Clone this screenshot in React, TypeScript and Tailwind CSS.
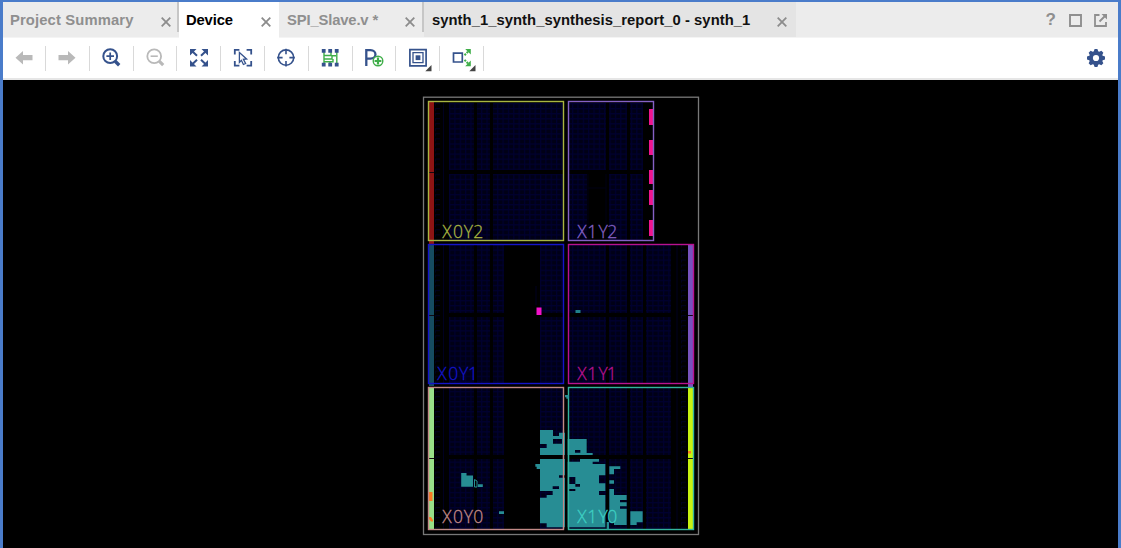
import React from "react";

const NAVY = "#35528c";
const GREEN = "#3fae49";

function Close({ className = "" }: { className?: string }) {
  return (
    <svg width="10" height="10" viewBox="0 0 10 10" className={className}>
      <path d="M.7 .7L9.3 9.3M9.3 .7L.7 9.3" stroke="#8c8c8c" strokeWidth="1.8" fill="none" />
    </svg>
  );
}

const icons: React.ReactNode[] = [
  <path key="back" fill="#b9b9b9" d="M1.5 10.7L9 4v4h9.5v5.2H9V17.4z" />,
  <path key="fwd" fill="#b9b9b9" d="M18.5 10.7L11 4v4H1.5v5.2H11V17.4z" />,
  <g key="in" fill="none" stroke={NAVY}>
    <circle cx="9.2" cy="9.2" r="6.9" strokeWidth="2" />
    <path d="M5.4 9.2H13M9.2 5.4V13" strokeWidth="1.7" />
    <path d="M14.2 14.2l4 4" strokeWidth="3.4" />
  </g>,
  <g key="out" fill="none" stroke="#b9b9b9">
    <circle cx="9.2" cy="9.2" r="6.9" strokeWidth="1.8" />
    <path d="M5.6 9.2h7.2" strokeWidth="1.6" />
    <path d="M14.2 14.2l4 4" strokeWidth="3.2" />
  </g>,
  <g key="fit" fill={NAVY} stroke={NAVY} strokeWidth="2">
    <path stroke="none" d="M1 2h6.5L1 8.5zM19 2h-6.5L19 8.5zM1 19.5h6.5L1 13zM19 19.5h-6.5L19 13z" />
    <path d="M3 4l5 4.8M17 4l-5 4.8M3 17.5l5-4.8M17 17.5l-5-4.8" />
  </g>,
  <g key="select" fill="none" stroke={NAVY} strokeWidth="1.8">
    <path d="M1.8 7.5V2.8h4.6M13.6 2.8h4.6v4.7M1.8 14v4.7h4.6M13.6 18.7h4.6V14" />
    <path d="M6.4 5.4l7.2 6.6-3.2.3 2.2 4.2-2.2 1-2-4.2-2 2.1z" strokeWidth="1.3" />
  </g>,
  <g key="target" fill="none" stroke={NAVY} strokeWidth="1.6">
    <circle cx="10" cy="10.6" r="7.7" />
    <path d="M10 1.8v5.4M10 14V19.4M1.2 10.6h5.4M13.4 10.6h5.4" strokeWidth="1.6" />
  </g>,
  <g key="route">
    <path d="M4 5v12M16.8 5v12M4 8.5h7V5M4 12h8V8.8h4M4 14.7h6v3M10 14.7h3V12" fill="none" stroke={GREEN} strokeWidth="1.4" />
    <path fill={NAVY} d="M1.8 2h3.8v3.8H1.8zM8.3 2h3.8v3.8H8.3zM14.8 2h3.8v3.8h-3.8zM1.8 15.7h3.8v3.8H1.8zM8.3 15.7h3.8v3.8H8.3zM14.8 15.7h3.8v3.8h-3.8z" />
  </g>,
  <g key="pin">
    <path d="M2.3 19V3.2h4.2c6.6 0 6.6 8.4 0 8.4H2.3" fill="none" stroke={NAVY} strokeWidth="2.3" />
    <circle cx="14" cy="14" r="4.8" fill="white" stroke={GREEN} strokeWidth="1.4" />
    <path d="M14 10.6v6.8M10.6 14h6.8" stroke={GREEN} strokeWidth="2.2" />
  </g>,
  <g key="layers" fill="none" stroke={NAVY}>
    <path d="M1.9 2.6h16.2v16.2H1.9z" strokeWidth="1.7" />
    <path d="M5 5.7h10v10H5z" strokeWidth="1.3" />
    <path d="M7.6 8.3h4.8v4.8H7.6z" fill={NAVY} stroke="none" />
    <path d="M23.5 18v6.2h-6.2z" fill="#444" stroke="none" />
  </g>,
  <g key="connect">
    <path d="M1.5 6.2h8.8V15H1.5z" fill="none" stroke={NAVY} strokeWidth="1.7" />
    <path d="M12.5 8.2l4-4M12.5 12.9l4 4" stroke={GREEN} strokeWidth="2" strokeDasharray="2 1" />
    <path d="M18.8 2v5.6L13.2 2zM18.8 19.2v-5.6l-5.6 5.6z" fill={GREEN} />
    <path d="M23.5 18v6.2h-6.2z" fill="#444" />
  </g>,
];

type Box = [number, number, number, number];

const fabric: Box[] = [
  [449, 103, 25, 67], [477, 103, 13, 67], [493, 103, 70, 67],
  [449, 174, 25, 66], [477, 174, 13, 66], [493, 174, 70, 66],
  [569, 103, 37, 67], [609, 103, 18, 67], [630, 103, 13, 67],
  [569, 174, 18, 66], [609, 174, 18, 66], [630, 174, 13, 66],
  [449, 245, 25, 68], [477, 245, 13, 68], [493, 245, 11, 68], [540, 245, 23, 68],
  [449, 317, 25, 66], [477, 317, 13, 66], [493, 317, 11, 66], [540, 317, 23, 66],
  [569, 245, 37, 68], [609, 245, 18, 68], [630, 245, 13, 68], [646, 245, 25, 68],
  [569, 317, 37, 66], [609, 317, 18, 66], [630, 317, 13, 66], [646, 317, 25, 66],
  [449, 388, 25, 67], [477, 388, 13, 67], [493, 388, 11, 67], [540, 388, 23, 67],
  [449, 459, 25, 70], [477, 459, 13, 70], [493, 459, 11, 70], [540, 459, 23, 70],
  [569, 388, 37, 67], [609, 388, 18, 67], [630, 388, 13, 67], [646, 388, 25, 67],
  [569, 459, 37, 70], [609, 459, 18, 70], [630, 459, 13, 70], [646, 459, 25, 70],
];

const ioTicks: Box[] = [
  [435, 103, 6, 137], [435, 245, 6, 138], [435, 388, 6, 141],
  [681, 245, 6, 138], [681, 388, 6, 141],
];

const regions: { label: string; box: Box; color: string; xs: string; ty: number }[] = [
  { label: "X0Y2", box: [428.5, 101.5, 135, 139], color: "#a9b541", xs: "442.3 453 463.7 473.3", ty: 238 },
  { label: "X1Y2", box: [568.5, 101.5, 85, 139], color: "#8561c5", xs: "577.3 587.3 598.6 607.2", ty: 238 },
  { label: "X0Y1", box: [428.5, 244.5, 135, 139], color: "#1414c8", xs: "437.2 448.3 459 468", ty: 380.3 },
  { label: "X1Y1", box: [568.5, 244.5, 125, 139], color: "#b9128f", xs: "577.3 587.3 598.6 606.8", ty: 380.3 },
  { label: "X0Y0", box: [428.5, 387.5, 135, 142], color: "#c28a87", xs: "442.3 453 463.7 473.3", ty: 523 },
  { label: "X1Y0", box: [568.5, 387.5, 125, 142], color: "#32b49d", xs: "577.3 587.3 598.6 607.2", ty: 523 },
];

function DeviceMap() {
  return (
    <svg width="278" height="440" viewBox="422 96 278 440" className="shrink-0">
      <defs>
        <pattern id="tiles" width="5.35" height="5.05" x="449" y="103" patternUnits="userSpaceOnUse">
          <rect width="5.35" height="5.05" fill="#000016" />
          <path d="M0 .6H5.35M.6 0V5.05" stroke="#00002f" strokeWidth="1.2" />
        </pattern>
        <pattern id="ticks" width="6" height="5.05" x="435" y="103" patternUnits="userSpaceOnUse">
          <path d="M0 .5H5M.5 0V3" stroke="#00001f" strokeWidth="1" />
        </pattern>
      </defs>
      <rect x="423.5" y="97.2" width="275" height="437.3" fill="none" stroke="#787878" strokeWidth="1.3" />
      {fabric.map(([x, y, w, h], i) => (
        <rect key={i} x={x} y={y} width={w} height={h} fill="url(#tiles)" />
      ))}
      {ioTicks.map(([x, y, w, h], i) => (
        <rect key={i} x={x} y={y} width={w} height={h} fill="url(#ticks)" />
      ))}
      <path d="M443.5 103V240M443.5 245V383M443.5 388V529M677 245V383M677 388V529M536 286V305" stroke="#000020" />
      <path d="M588 174V240M606 174V240M588 188H606" stroke="#000014" />

      <path d="M429 102H434V244H429z" fill="#8d1414" />
      <path d="M429 245H434V386H429z" fill="#164b61" />
      <path d="M429 388H434V529H429z" fill="#98df89" />
      <path d="M688 245H693V387H688z" fill="#7652bd" />
      <path d="M688 388H693V529H688z" fill="#c8f211" />
      <path d="M429 172.5H434M429 315.5H434M429 458.5H434M688 315.5H693M688 458.5H693" stroke="#120812" />
      <path d="M429 492H432.5V501H429zM429 517H431L433 520V521.5H431L429 519zM688 451H691V453.5H688z" fill="#fb7a22" />
      <path d="M649 109H653V125H649zM649 140H653V155H649zM649 170H653V184H649zM649 190H653V205H649zM649 220H653V236H649z" fill="#f0148f" />
      <path d="M536.5 307.5H541.5V315H536.5z" fill="#f312c9" />
      <path d="M575.5 310H580.5V313H575.5z" fill="#20808a" />

      {regions.map(({ label, box: [x, y, w, h], color }) => (
        <rect key={label} x={x} y={y} width={w} height={h} fill="none" stroke={color} strokeWidth="1.4" />
      ))}

      <g transform="translate(530 380) scale(.33333)" fill="#278d94" fillRule="evenodd">
        <path d="M30 150H69V168H87V158H105V225H30V204H50V192H30zM69 177H96V191H69z" />
        <path d="M30 237H105V442H50V430H30V353H50V345H68V333H30zM87 286H105V293H87zM68 319H87V327H68z" />
        <path d="M113 177H170V219H188V225H113zM135 210H151V218H135z" />
        <path d="M113 245H150V237H207V245H188V252H226V286H207V310H226V333H207V345H226V442H113zM116 291H136V312H150V320H136V312H116zM116 327H136V333H116z" />
        <path d="M238 259H271V267H252V283H238zM238 301H252V311H238zM238 327H252V345H290V360H270V367H290V379H270V386H290V435H252V427H238zM301 394H338V427H320V435H301z" />
        <path d="M230 426H237V448H230zM105 45H116V56H109V52H105zM16 252H35V267H20V260H16z" />
      </g>
      <path d="M461.2 473H466.5V475.5H473V486.7H461.2zM478 484.2H482.8V487H478zM499 511.3H504V514H499z" fill="#278d94" />
      <path d="M474.5 479.5V487H477V481z" stroke="#278d94" fill="none" />
      <path d="M563.5 430V529" stroke="#c28a87" strokeWidth="1.2" />
      <path d="M568.5 430V529" stroke="#32b49d" strokeWidth="1.2" />

      {regions.map(({ label, color, xs, ty }) => {
        const ink = label === "X1Y0" ? "#3ed0c3" : color;
        return (
          <text
            key={label}
            x={xs}
            y={ty}
            fill={ink}
            stroke={ink}
            strokeWidth="0.3"
            className="font-['Open_Sans',sans-serif] text-[17.5px] font-light"
          >
            {label}
          </text>
        );
      })}
    </svg>
  );
}

export default function App() {
  return (
    <div className="flex h-[548px] w-[1121px] flex-col overflow-hidden border-x-3 border-t-2 border-[#4a7cca] bg-black font-['Liberation_Sans',sans-serif]">
      <div className="flex h-9 shrink-0 border-b border-[#f4f4f4] bg-[#ececec] text-[14.8px] leading-9 font-bold whitespace-nowrap text-[#8f8f8f]">
        <div className="flex w-[174px] items-center justify-between pr-1.5 pl-[7px]">
          <span className="tracking-[0.12px]">Project Summary</span>
          <Close className="mt-1" />
        </div>
        <div className="h-[30px] w-0.5 bg-[#c6c6c6]" />
        <div className="flex h-9 w-[100px] items-center justify-between bg-white pr-2 pl-[7px] text-black">
          <span className="tracking-[-0.15px]">Device</span>
          <Close className="mt-1" />
        </div>
        <div className="flex w-[143px] items-center justify-between pr-[7px] pl-2">
          <span className="tracking-[-0.15px]">SPI_Slave.v *</span>
          <Close className="mt-1" />
        </div>
        <div className="h-[30px] w-0.5 bg-[#c6c6c6]" />
        <div className="flex w-[372px] items-center justify-between bg-[#e4e4e4] pr-[9px] pl-2 text-[#111]">
          <span className="tracking-[0.04px]">synth_1_synth_synthesis_report_0 - synth_1</span>
          <Close className="mt-1" />
        </div>
        <div className="flex flex-1 items-center justify-end gap-3 pr-[11px]">
          <span className="mr-px text-[17px]">?</span>
          <svg width="13" height="13" viewBox="0 0 13 13" className="mt-px">
            <path d="M1 1h11v11H1z" fill="none" stroke="#8f8f8f" strokeWidth="1.9" />
          </svg>
          <svg width="13" height="13" viewBox="0 0 13 13" className="mt-px">
            <path d="M5.5 1H1v11h11V8M5.5 7.5L11 2" fill="none" stroke="#8f8f8f" strokeWidth="1.8" />
            <path d="M7.5 0H13v5.5z" fill="#8f8f8f" />
          </svg>
        </div>
      </div>

      <div className="flex h-[42px] shrink-0 items-center justify-between border-b-2 border-[#e6e6e6] bg-white">
        <div className="flex items-center">
          {icons.map((icon, i) => (
            <div
              key={i}
              className="flex h-[25px] w-[43.8px] items-center justify-center border-r border-[#d9d9d9] first:w-[43px]"
            >
              <svg width="20" height="20" viewBox="0 0 20 20" className="-mt-[3px] overflow-visible">
                {icon}
              </svg>
            </div>
          ))}
        </div>
        <svg width="18" height="18" viewBox="0 0 18 18" className="mr-[13px]">
          <g fill={NAVY}>
            <path d="M6.8 2.2L7.6 0h2.8l.8 2.2v13.6L10.4 18H7.6l-.8-2.2zM2.2 6.8L0 7.6v2.8l2.2.8h13.6l2.2-.8V7.6l-2.2-.8z" />
            <path d="M6.8 2.2L7.6 0h2.8l.8 2.2v13.6L10.4 18H7.6l-.8-2.2zM2.2 6.8L0 7.6v2.8l2.2.8h13.6l2.2-.8V7.6l-2.2-.8z" transform="rotate(45 9 9)" />
            <circle cx="9" cy="9" r="7" />
          </g>
          <circle cx="9" cy="9" r="3.1" fill="white" />
        </svg>
      </div>

      <div className="flex flex-1 items-start justify-start bg-black pt-4 pl-[419px]">
        <DeviceMap />
      </div>
    </div>
  );
}
